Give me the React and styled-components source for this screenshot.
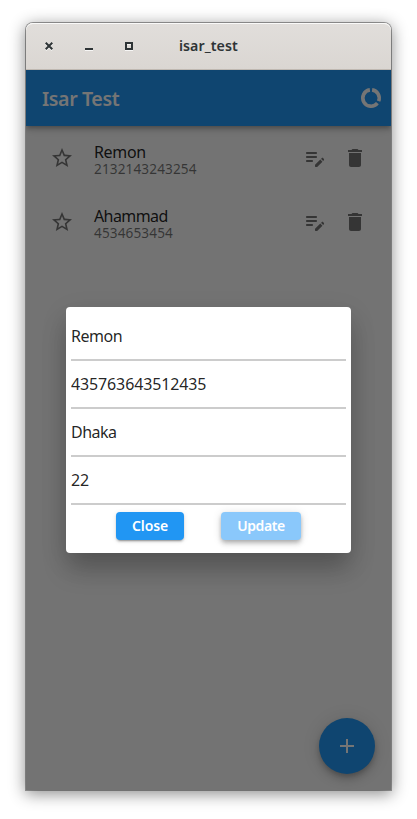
import React from "react";
import styled, { createGlobalStyle } from "styled-components";

const GlobalStyle = createGlobalStyle`
  *, *::before, *::after { box-sizing: border-box; }
  body {
    margin: 0;
    background: #ffffff;
    font-family: "Noto Sans", "Open Sans", sans-serif;
  }
  button { font-family: inherit; }
`;

const Desktop = styled.main`
  width: 417px;
  height: 819px;
  padding: 23px 26px 29px;
  overflow: hidden;
`;

const WindowFrame = styled.section`
  width: 365px;
  height: 767px;
  display: flex;
  flex-direction: column;
  border-radius: 7px 7px 0 0;
  box-shadow: 0 0 0 1px rgba(0, 0, 0, 0.36), 0 3px 16px 1px rgba(0, 0, 0, 0.45);
`;

const TitleBar = styled.header`
  height: 47px;
  flex: none;
  display: flex;
  align-items: center;
  padding-left: 13px;
  border-radius: 7px 7px 0 0;
  border-bottom: 1px solid #bfb8b1;
  background: linear-gradient(#e1dedb, #dad6d2);
  box-shadow: inset 0 1px #fafaf9;
`;

const WindowControls = styled.div`
  display: flex;
  gap: 20px;
`;

const WindowButton = styled.button`
  width: 20px;
  height: 20px;
  padding: 0;
  border: 0;
  background: none;
  display: grid;
  place-items: center;
  color: #2e3436;
  filter: drop-shadow(0 1px rgba(255, 255, 255, 0.75));
`;

const WindowTitle = styled.h1`
  margin: 0 0 0 40px;
  color: #2e3436;
  font-size: 14.2px;
  line-height: 20px;
  font-weight: 600;
  letter-spacing: ${(p) => p.$tracking}px;
`;

const Content = styled.div`
  position: relative;
  flex: 1;
  display: flex;
  flex-direction: column;
  overflow: hidden;
  background: #fafafa;
`;

const AppBar = styled.div`
  height: 56px;
  flex: none;
  display: flex;
  align-items: center;
  justify-content: space-between;
  padding: 0 8px 0 16px;
  color: #ffffff;
  background: #2196f3;
  box-shadow: 0 2px 4px -1px rgba(0, 0, 0, 0.2), 0 4px 5px rgba(0, 0, 0, 0.14),
    0 1px 10px rgba(0, 0, 0, 0.12);
`;

const AppTitle = styled.h2`
  margin: 0;
  padding-top: 2px;
  font-size: 19.6px;
  line-height: 24px;
  font-weight: 600;
  letter-spacing: ${(p) => p.$tracking}px;
`;

const ContactList = styled.ul`
  margin: 0;
  padding: 0;
  list-style: none;
`;

const ContactRow = styled.li`
  height: 64px;
  display: flex;
  align-items: center;
  padding: 0 16px;
`;

const ContactText = styled.div`
  flex: 1;
  padding: 4px 0 0 12px;
`;

const ContactName = styled.div`
  color: rgba(0, 0, 0, 0.87);
  font-size: 16px;
  line-height: 18px;
  letter-spacing: ${(p) => p.$tracking}px;
`;

const ContactPhone = styled.div`
  color: rgba(0, 0, 0, 0.54);
  font-size: 13.6px;
  line-height: 16px;
  letter-spacing: 0.12px;
`;

const IconButton = styled.button`
  width: ${(p) => p.$width || 40}px;
  height: 40px;
  padding: 0;
  border: 0;
  background: none;
  display: grid;
  place-items: center;
  color: ${(p) => p.$color || "rgba(0, 0, 0, 0.54)"};
`;

const Icon = styled.svg`
  display: block;
  width: 24px;
  height: 24px;
  fill: currentColor;
`;

const Fab = styled.button`
  width: 56px;
  height: 56px;
  margin: auto 16px 16px auto;
  padding: 0;
  flex: none;
  border: 0;
  border-radius: 50%;
  display: grid;
  place-items: center;
  color: #ffffff;
  background: #2196f3;
  box-shadow: 0 3px 5px -1px rgba(0, 0, 0, 0.2), 0 6px 10px rgba(0, 0, 0, 0.14),
    0 1px 18px rgba(0, 0, 0, 0.12);
`;

const Scrim = styled.div`
  position: absolute;
  inset: 0;
  display: flex;
  align-items: center;
  justify-content: center;
  background: rgba(0, 0, 0, 0.54);
`;

const Dialog = styled.form`
  width: 285px;
  height: 246px;
  padding: 6px 5px 0;
  border-radius: 4px;
  background: #ffffff;
  box-shadow: 0 18px 26px -2px rgba(0, 0, 0, 0.22), 0 8px 28px rgba(0, 0, 0, 0.1);
`;

const Field = styled.input`
  display: block;
  width: 100%;
  height: 48px;
  padding: 0 0 1px;
  border: 0;
  border-bottom: 2px solid #cccccc;
  border-radius: 0;
  outline: none;
  background: transparent;
  color: rgba(0, 0, 0, 0.87);
  font-family: inherit;
  font-size: 16px;
  letter-spacing: ${(p) => p.$tracking}px;
`;

const Actions = styled.div`
  display: flex;
  justify-content: center;
  gap: 37px;
  padding-top: 7px;
`;

const ActionButton = styled.button`
  width: ${(p) => p.$width}px;
  height: 28px;
  padding: 0 0 1px;
  border: 0;
  border-radius: 4px;
  color: #ffffff;
  background: ${(p) => (p.$light ? "#8ac8fb" : "#2196f3")};
  font-size: 14px;
  font-weight: 600;
  letter-spacing: ${(p) => p.$tracking}px;
  box-shadow: ${(p) =>
    p.$light
      ? "0 2px 4px -1px rgba(0,0,0,.2), 0 4px 5px rgba(0,0,0,.14), 0 1px 10px rgba(0,0,0,.12)"
      : "0 3px 1px -2px rgba(0,0,0,.2), 0 2px 2px rgba(0,0,0,.14), 0 1px 5px rgba(0,0,0,.12)"};
`;

const paths = {
  star: "M22 9.24l-7.19-.62L12 2 9.19 8.63 2 9.24l5.46 4.73L5.82 21 12 17.27 18.18 21l-1.63-7.03L22 9.24zM12 15.4l-3.76 2.27 1-4.28-3.32-2.88 4.38-.38L12 6.1l1.71 4.04 4.38.38-3.32 2.88 1 4.28L12 15.4z",
  edit: "M14 11c0 .55-.45 1-1 1H4c-.55 0-1-.45-1-1s.45-1 1-1h9c.55 0 1 .45 1 1zM3 7c0 .55.45 1 1 1h9c.55 0 1-.45 1-1s-.45-1-1-1H4c-.55 0-1 .45-1 1zm7 8c0-.55-.45-1-1-1H4c-.55 0-1 .45-1 1s.45 1 1 1h5c.55 0 1-.45 1-1zm8.01-2.13.71-.71c.39-.39 1.02-.39 1.41 0l.71.71c.39.39.39 1.02 0 1.41l-.71.71-2.12-2.12zm-.71.71-5.01 5.01c-.18.18-.29.44-.29.7v1.21c0 .28.22.5.5.5h1.21c.27 0 .52-.11.71-.29l5-5-2.12-2.13z",
  trash: "M6 19c0 1.1.9 2 2 2h8c1.1 0 2-.9 2-2V7H6v12zM19 4h-3.5l-.7-.7c-.2-.2-.45-.3-.7-.3H9.9c-.25 0-.5.1-.7.3L8.5 4H5v2h14V4z",
  add: "M19 13h-6v6h-2v-6H5v-2h6V5h2v6h6v2z",
};

const Glyph = ({ name }) => (
  <Icon viewBox="0 0 24 24" aria-hidden="true">
    <path d={paths[name]} />
  </Icon>
);

const UsageRing = () => (
  <Icon viewBox="0 0 24 24" aria-hidden="true">
    <path
      d="M13.1 3.87A8.2 8.2 0 0 1 19.6 15.07M18.4 17.13A8.2 8.2 0 1 1 10.9 3.87"
      fill="none"
      stroke="currentColor"
      strokeWidth="3.6"
    />
  </Icon>
);

const contacts = [
  { name: "Remon", phone: "2132143243254", tracking: -0.35 },
  { name: "Ahammad", phone: "4534653454", tracking: -0.6 },
];

const fields = [
  { label: "Name", value: "Remon", tracking: -0.45 },
  { label: "Phone", value: "435763643512435", tracking: -0.13 },
  { label: "City", value: "Dhaka", tracking: -0.5 },
  { label: "Age", value: "22", tracking: -0.13 },
];

export default function App() {
  return (
    <>
      <GlobalStyle />
      <Desktop>
        <WindowFrame>
          <TitleBar>
            <WindowControls>
              <WindowButton aria-label="Close window">
                <svg width="8" height="8" viewBox="0 0 8 8">
                  <path d="M.7.7l6.6 6.6M7.3.7L.7 7.3" stroke="currentColor" strokeWidth="2" />
                </svg>
              </WindowButton>
              <WindowButton aria-label="Minimize">
                <svg width="8" height="8" viewBox="0 0 8 8">
                  <path d="M0 6h8v2H0z" fill="currentColor" />
                </svg>
              </WindowButton>
              <WindowButton aria-label="Maximize">
                <svg width="8" height="8" viewBox="0 0 8 8">
                  <path d="M1 1h6v6H1z" fill="none" stroke="currentColor" strokeWidth="2" />
                </svg>
              </WindowButton>
            </WindowControls>
            <WindowTitle $tracking={0.05}>isar_test</WindowTitle>
          </TitleBar>
          <Content>
            <AppBar>
              <AppTitle $tracking={-0.4}>Isar Test</AppTitle>
              <IconButton $width={24} $color="#ffffff" aria-label="Data usage">
                <UsageRing />
              </IconButton>
            </AppBar>
            <ContactList>
              {contacts.map((c) => (
                <ContactRow key={c.name}>
                  <IconButton aria-label="Favorite">
                    <Glyph name="star" />
                  </IconButton>
                  <ContactText>
                    <ContactName $tracking={c.tracking}>{c.name}</ContactName>
                    <ContactPhone>{c.phone}</ContactPhone>
                  </ContactText>
                  <IconButton aria-label="Edit">
                    <Glyph name="edit" />
                  </IconButton>
                  <IconButton aria-label="Delete">
                    <Glyph name="trash" />
                  </IconButton>
                </ContactRow>
              ))}
            </ContactList>
            <Fab aria-label="Add">
              <Glyph name="add" />
            </Fab>
            <Scrim>
              <Dialog onSubmit={(e) => e.preventDefault()}>
                {fields.map((f) => (
                  <Field
                    key={f.label}
                    aria-label={f.label}
                    defaultValue={f.value}
                    $tracking={f.tracking}
                  />
                ))}
                <Actions>
                  <ActionButton type="button" $width={68} $tracking={-0.1}>
                    Close
                  </ActionButton>
                  <ActionButton type="button" $width={80} $tracking={-0.4} $light>
                    Update
                  </ActionButton>
                </Actions>
              </Dialog>
            </Scrim>
          </Content>
        </WindowFrame>
      </Desktop>
    </>
  );
}
